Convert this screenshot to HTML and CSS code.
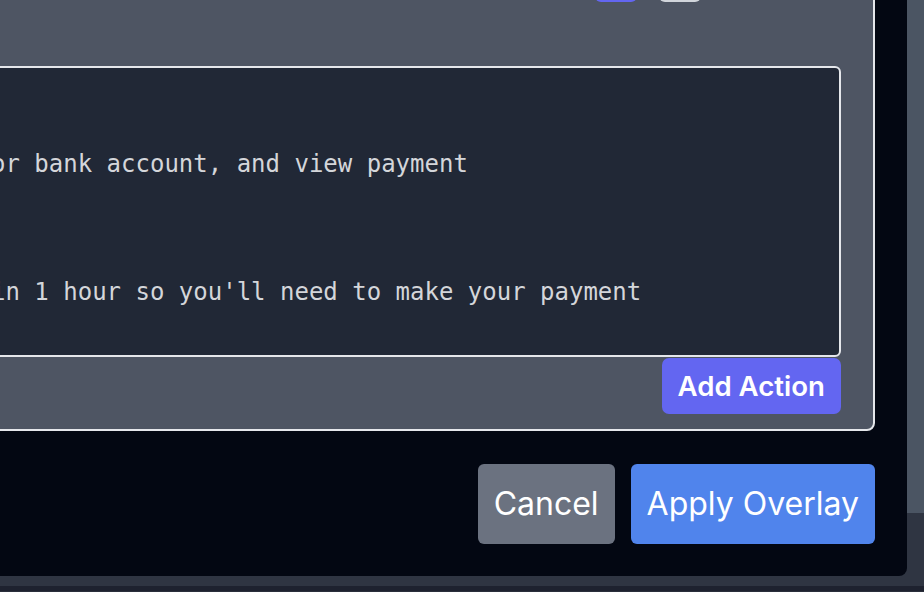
FILE: index.html
```html
<!DOCTYPE html>
<html lang="en">
<head>
<meta charset="utf-8">
<title>Overlay editor</title>
<link rel="stylesheet" href="styles.css">
</head>
<body>
<div class="app">
  <div class="app-main"></div>
  <div class="app-foot"><div class="app-bar"></div></div>

  <div class="modal">
    <div class="panel">
      <div class="toolbar">
        <button class="chip chip-active" aria-label="Option A"></button>
        <button class="chip chip-muted" aria-label="Option B"></button>
      </div>
      <div class="editor">

or bank account, and view payment



in 1 hour so you'll need to make your payment</div>
      <div class="panel-actions">
        <button class="btn btn-add">Add Action</button>
      </div>
    </div>
    <div class="modal-footer">
      <button class="btn btn-cancel">Cancel</button>
      <button class="btn btn-apply">Apply Overlay</button>
    </div>
  </div>
</div>
</body>
</html>
```

FILE: styles.css
```css
* { box-sizing: border-box; }

html, body {
  margin: 0;
  padding: 0;
}

body {
  width: 924px;
  height: 592px;
  overflow: hidden;
  background: #1e222f;
  font-family: Inter, "Noto Sans", sans-serif;
}

.app {
  position: relative;
  width: 924px;
  height: 592px;
  display: flex;
  flex-direction: column;
}

.app-main {
  height: 513px;
  background: #4b5563;
}

.app-foot {
  flex: 1;
  background: #2f3542;
  display: flex;
  flex-direction: column;
  justify-content: flex-end;
}

.app-bar {
  height: 6px;
  background: #1e222f;
  border-bottom: 1px solid #2a2f3b;
}

/* modal sits over the app */
.modal {
  position: absolute;
  top: -89px;
  left: -93px;
  right: 17px;
  background: #030712;
  border-radius: 8px;
  padding: 32px;
  display: flex;
  flex-direction: column;
}

.panel {
  background: #4e5563;
  border: 2px solid #e5e7eb;
  border-radius: 8px;
  padding: 16px 32px 15px 32px;
  display: flex;
  flex-direction: column;
}

.toolbar {
  display: flex;
  justify-content: flex-end;
  gap: 22px;
  padding-right: 140px;
  height: 41px;
}

.chip {
  width: 42px;
  height: 41px;
  border: none;
  border-radius: 6px;
  padding: 0;
}

.chip-active { background: #6366f1; }
.chip-muted { background: #d1d5db; }

.editor {
  margin-top: 64px;
  height: 291px;
  background: #212836;
  border: 2px solid #e5e7eb;
  border-radius: 6px;
  padding: 16px 16px 15px 16px;
  font-family: "DejaVu Sans Mono", monospace;
  font-size: 24px;
  line-height: 32px;
  color: #d4d6da;
  white-space: pre;
  overflow: hidden;
}

.panel-actions {
  display: flex;
  justify-content: flex-end;
  margin-top: 1px;
}

.btn {
  border: none;
  color: #ffffff;
  font-family: Inter, "Noto Sans", sans-serif;
  cursor: pointer;
}

.btn-add {
  background: #6366f1;
  font-size: 27.6px;
  font-weight: 600;
  line-height: 40px;
  padding: 8px 16px;
  border-radius: 7px;
}

.modal-footer {
  margin-top: 33px;
  display: flex;
  justify-content: flex-end;
  gap: 16px;
}

.btn-cancel,
.btn-apply {
  font-size: 32px;
  font-weight: 400;
  line-height: 48px;
  padding: 16px 16px;
  border-radius: 6px;
}

.btn-cancel { background: #6b7280; }
.btn-apply { background: #5084ec; }
```
